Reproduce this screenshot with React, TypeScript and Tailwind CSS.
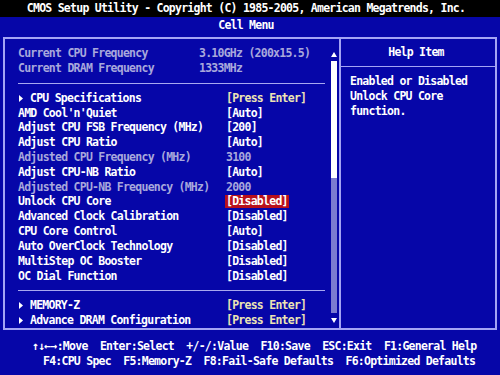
type Row =
  | { kind: 'sep' }
  | {
      kind: 'item';
      label: string;
      value?: string;
      dim?: boolean;
      sub?: boolean;
      hl?: boolean;
      info?: boolean;
    };

const ROWS: Row[] = [
  { kind: 'item', label: 'Current CPU Frequency', value: '3.10GHz (200x15.5)', dim: true, info: true },
  { kind: 'item', label: 'Current DRAM Frequency', value: '1333MHz', dim: true, info: true },
  { kind: 'sep' },
  { kind: 'item', label: 'CPU Specifications', value: '[Press Enter]', sub: true },
  { kind: 'item', label: "AMD Cool'n'Quiet", value: '[Auto]' },
  { kind: 'item', label: 'Adjust CPU FSB Frequency (MHz)', value: '[200]' },
  { kind: 'item', label: 'Adjust CPU Ratio', value: '[Auto]' },
  { kind: 'item', label: 'Adjusted CPU Frequency (MHz)', value: '3100', dim: true },
  { kind: 'item', label: 'Adjust CPU-NB Ratio', value: '[Auto]' },
  { kind: 'item', label: 'Adjusted CPU-NB Frequency (MHz)', value: '2000', dim: true },
  { kind: 'item', label: 'Unlock CPU Core', value: '[Disabled]', hl: true },
  { kind: 'item', label: 'Advanced Clock Calibration', value: '[Disabled]' },
  { kind: 'item', label: 'CPU Core Control', value: '[Auto]' },
  { kind: 'item', label: 'Auto OverClock Technology', value: '[Disabled]' },
  { kind: 'item', label: 'MultiStep OC Booster', value: '[Disabled]' },
  { kind: 'item', label: 'OC Dial Function', value: '[Disabled]' },
  { kind: 'sep' },
  { kind: 'item', label: 'MEMORY-Z', value: '[Press Enter]', sub: true },
  { kind: 'item', label: 'Advance DRAM Configuration', value: '[Press Enter]', sub: true },
];

function Tri() {
  return (
    <svg width="12" height="7" viewBox="0 0 12 7" className="inline-block">
      <path d="M1 0 L5 3.5 L1 7 Z" fill="#ffffff" />
    </svg>
  );
}

function MenuRow({ row }: { row: Row }) {
  if (row.kind === 'sep') {
    return (
      <div className="h-[14.83px] flex items-center">
        <div className="h-px w-[307px] bg-[#a8a8f0]" />
      </div>
    );
  }
  const labelColor = row.dim ? 'text-[#a8a8dc]' : 'text-white';
  let valueColor = row.dim ? 'text-[#a8a8dc]' : 'text-white';
  if (row.value === '[Press Enter]') valueColor = 'text-[#ece4b4]';
  return (
    <div className="h-[14.83px] flex items-center whitespace-pre">
      <div className={`${row.info ? 'w-[181px]' : 'w-[208px]'} shrink-0 ${labelColor}`}>
        {row.sub && <Tri />}
        {row.label}
      </div>
      <div
        className={
          row.hl
            ? 'bg-[#b8101c] text-white px-[1px] -ml-[1px] leading-[13px]'
            : valueColor
        }
      >
        {row.value}
      </div>
    </div>
  );
}

export default function App() {
  return (
    <div className="w-[500px] h-[375px] bg-[#0606a8] font-['DejaVu_Sans_Mono',monospace] font-bold text-[11.5px] tracking-[-0.75px] leading-[15px] text-white flex flex-col overflow-hidden">
      {/* title */}
      <div className="h-[17px] bg-black flex items-center justify-center pr-[8px]">
        CMOS Setup Utility - Copyright (C) 1985-2005, American Megatrends, Inc.
      </div>
      <div className="h-[15px] mt-[1px] flex items-center justify-center pr-[8px]">Cell Menu</div>

      {/* main frame */}
      <div className="mt-[4px] ml-[3px] w-[494px] h-[297px] border-2 border-[#a4a4f4] flex">
        {/* left panel */}
        <div className="w-[334px] flex">
          <div className="flex-1 pl-[13px] pt-[7.6px]">
            {ROWS.map((r, i) => (
              <MenuRow key={i} row={r} />
            ))}
          </div>
          {/* scrollbar */}
          <div className="w-[6px] mr-[2px] pt-[13px] flex flex-col items-center">
            <svg width="6" height="5" viewBox="0 0 6 5">
              <path d="M3 0 L6 5 L0 5 Z" fill="#ffffff" />
            </svg>
            <div className="mt-[4px] w-[6px] h-[117px] bg-white" />
            <div className="w-[6px] h-[135px] bg-[#7c7cd0]" />
            <svg width="6" height="5" viewBox="0 0 6 5" className="mt-[5px]">
              <path d="M0 0 L6 0 L3 5 Z" fill="#ffffff" />
            </svg>
          </div>
        </div>
        <div className="w-[2px] bg-[#a4a4f4]" />
        {/* help panel */}
        <div className="flex-1 flex flex-col">
          <div className="h-[28px] flex items-center justify-center border-b border-[#a4a4f4] pr-[4px]">
            Help Item
          </div>
          <div className="pl-[9px] pt-[7px] whitespace-pre">
            <div>Enabled or Disabled</div>
            <div>Unlock CPU Core</div>
            <div>function.</div>
          </div>
        </div>
      </div>

      {/* footer */}
      <div className="mt-[9px] whitespace-pre">
        <div className="pl-[32px]">{'↑↓←→:Move  Enter:Select  +/-/:Value  F10:Save  ESC:Exit  F1:General Help'}</div>
        <div className="pl-[43px]">{'F4:CPU Spec  F5:Memory-Z  F8:Fail-Safe Defaults  F6:Optimized Defaults'}</div>
      </div>
      <div className="flex-1 bg-black mt-[6px]" />
    </div>
  );
}
